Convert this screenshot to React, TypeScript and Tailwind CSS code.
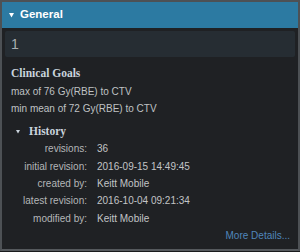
import React from "react";

const rows: [string, string][] = [
  ["revisions:", "36"],
  ["initial revision:", "2016-09-15 14:49:45"],
  ["created by:", "Keitt Mobile"],
  ["latest revision:", "2016-10-04 09:21:34"],
  ["modified by:", "Keitt Mobile"],
];

export default function App() {
  return (
    <div className="w-[300px] h-[252px] bg-[#1a1b1d] overflow-hidden">
      <div
        className="w-[300px] h-[251px] border-2 border-[#4d5155] border-b-[#55595d] bg-[#1f2124] flex flex-col"
        style={{ fontFamily: '"Liberation Sans", Arial, sans-serif' }}
      >
        <div className="h-[26px] bg-[#2c7aa2] flex items-center shrink-0">
          <svg width="5" height="5" viewBox="0 0 5 5" className="ml-[7px] mr-[6px]">
            <polygon points="0,0 5,0 2.5,4.5" fill="#ffffff" />
          </svg>
          <span className="text-[11.5px] font-bold text-white">General</span>
        </div>
        <div className="mx-[3px] mt-[3px] h-[26px] bg-[#262d33] rounded-[2px] flex items-center pl-[6px] text-[14px] text-[#a9adb1] shrink-0">
          1
        </div>
        <div className="pl-[9px] flex flex-col">
          <div
            className="mt-[8px] h-[17px] flex items-center text-[11.5px] font-bold text-[#c9d3dc]"
            style={{ fontFamily: '"Liberation Serif", "Times New Roman", serif' }}
          >
            Clinical Goals
          </div>
          <div className="mt-[1px] h-[17px] flex items-center text-[10px] text-[#bfc1c3]">
            max of 76 Gy(RBE) to CTV
          </div>
          <div className="h-[17px] flex items-center text-[10px] text-[#bfc1c3] whitespace-nowrap">
            min mean of 72 Gy(RBE) to CTV
          </div>
          <div className="mt-[6px] h-[17px] flex items-center">
            <svg width="4" height="4" viewBox="0 0 4 4" className="ml-[5px] mr-[9px]">
              <polygon points="0,0 4,0 2,3.6" fill="#c9d3dc" />
            </svg>
            <span
              className="text-[11.5px] font-bold text-[#c9d3dc]"
              style={{ fontFamily: '"Liberation Serif", "Times New Roman", serif' }}
            >
              History
            </span>
          </div>
          <div className="grid grid-cols-[76px_1fr] gap-x-[10px] text-[10px]">
            {rows.map(([k, v]) => (
              <React.Fragment key={k}>
                <div className="h-[17.4px] flex items-center justify-end text-[#b4b6b8] whitespace-nowrap">
                  {k}
                </div>
                <div className="h-[17.4px] flex items-center text-[#c2c4c6] whitespace-nowrap">
                  {v}
                </div>
              </React.Fragment>
            ))}
          </div>
        </div>
        <div className="h-[17px] flex items-center justify-end pr-[8px] text-[10px] text-[#4f86bb]">
          More Details...
        </div>
      </div>
    </div>
  );
}
